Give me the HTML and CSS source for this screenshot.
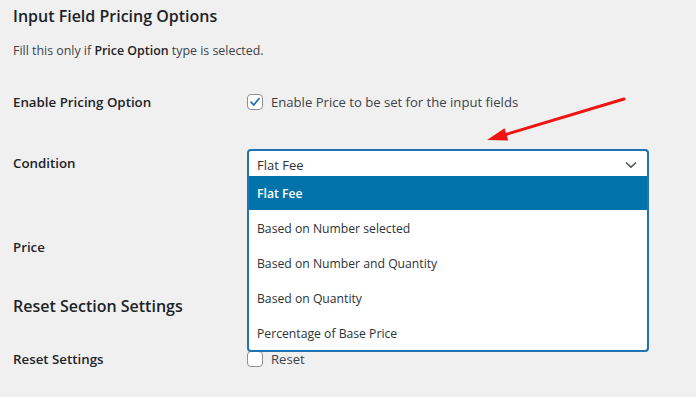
FILE: index.html
```html
<!DOCTYPE html>
<html>
<head>
<meta charset="utf-8">
<link rel="stylesheet" href="styles.css">
</head>
<body>
<div class="page">
  <h2 class="title">Input Field Pricing Options</h2>
  <p class="desc">Fill this only if <strong>Price Option</strong> type is selected.</p>

  <div class="row row-enable">
    <div class="label">Enable Pricing Option</div>
    <label class="check">
      <span class="box checked">
        <svg viewBox="0 0 16 16" width="16" height="16"><path d="M3.6 8.4 L6.6 11.4 L12.6 4.2" fill="none" stroke="#2271b1" stroke-width="2" stroke-linecap="square"/></svg>
      </span>
      <span>Enable Price to be set for the input fields</span>
    </label>
  </div>

  <div class="row row-condition">
    <div class="label label-select">Condition</div>
    <div class="select-wrap">
      <div class="select">
        <span>Flat Fee</span>
        <svg class="chev" viewBox="0 0 12 8" width="12" height="8"><path d="M1 1.5 L6 6.2 L11 1.5" fill="none" stroke="#50575e" stroke-width="1.6"/></svg>
      </div>
      <ul class="options">
        <li class="selected">Flat Fee</li>
        <li>Based on Number selected</li>
        <li>Based on Number and Quantity</li>
        <li>Based on Quantity</li>
        <li>Percentage of Base Price</li>
      </ul>
    </div>
  </div>

  <div class="row row-price">
    <div class="label label-input">Price</div>
    <div class="input"></div>
  </div>

  <h2 class="title title-reset">Reset Section Settings</h2>

  <div class="row row-reset">
    <div class="label">Reset Settings</div>
    <label class="check">
      <span class="box"></span>
      <span>Reset</span>
    </label>
  </div>

  <svg class="arrow" width="696" height="397" viewBox="0 0 696 397">
    <line x1="624" y1="99" x2="504" y2="135" stroke="#f01414" stroke-width="3" stroke-linecap="round"/>
    <polygon points="487,140 504.5,128.2 508.2,140.6" fill="#f01414"/>
  </svg>
</div>
</body>
</html>
```

FILE: styles.css
```css
html, body {
  margin: 0;
  padding: 0;
  background: #f0f0f1;
}

body {
  font-family: "Open Sans", "Noto Sans", sans-serif;
  font-size: 13px;
  color: #1d2327;
  width: 696px;
  height: 397px;
  overflow: hidden;
}

.page {
  position: relative;
  padding: 0 13px;
}

.title {
  margin: 0;
  font-size: 16px;
  font-weight: 600;
  line-height: 32px;
  height: 32px;
  color: #1d2327;
}

.desc {
  margin: 9px 0 0;
  line-height: 20px;
  height: 20px;
  font-size: 12.4px;
  color: #3c434a;
}

.desc strong {
  font-weight: 600;
  color: #1d2327;
}

.row {
  display: grid;
  grid-template-columns: 234px 402px;
  align-items: start;
}

.label {
  font-weight: 600;
  font-size: 13.3px;
  line-height: 20px;
  color: #1d2327;
}

.row-enable {
  margin-top: 31px;
  height: 20px;
}

.row-condition {
  margin-top: 37px;
  height: 27px;
}

.label-select {
  line-height: 29px;
}

.row-price {
  margin-top: 57px;
  height: 28px;
}

.label-input {
  line-height: 28px;
}

.title-reset {
  margin-top: 29px;
}

.row-reset {
  margin-top: 27px;
  height: 20px;
}

.check {
  display: flex;
  align-items: center;
  gap: 8px;
  height: 20px;
  font-size: 13.1px;
  color: #3c434a;
}

.box {
  width: 14px;
  height: 14px;
  border: 1px solid #8c8f94;
  border-radius: 4px;
  background: #fff;
  display: flex;
  align-items: center;
  justify-content: center;
  flex: none;
}

.box svg {
  display: block;
}

.select-wrap {
  position: relative;
  width: 402px;
}

.select {
  box-sizing: border-box;
  height: 27px;
  border: 2px solid #2271b1;
  border-bottom: none;
  border-radius: 4px 4px 0 0;
  background: #fff;
  display: flex;
  align-items: center;
  justify-content: space-between;
  padding: 2px 10px 0 8px;
  font-size: 13px;
  color: #2c3338;
}

.chev {
  display: block;
}

.input {
  height: 28px;
}

.options {
  position: absolute;
  top: 27px;
  left: 0;
  width: 402px;
  box-sizing: border-box;
  margin: 0;
  padding: 0;
  list-style: none;
  background: #fff;
  border: 2px solid #2271b1;
  border-top: none;
  border-radius: 0 0 4px 4px;
  z-index: 2;
}

.options li {
  height: 35px;
  line-height: 37px;
  padding-left: 8px;
  font-size: 12.2px;
  color: #2c3338;
}

.options li.selected {
  height: 34px;
  line-height: 36px;
  background: #0073aa;
  color: #fff;
  font-weight: 600;
}

.arrow {
  position: absolute;
  top: 0;
  left: 0;
  pointer-events: none;
  z-index: 3;
}
```
